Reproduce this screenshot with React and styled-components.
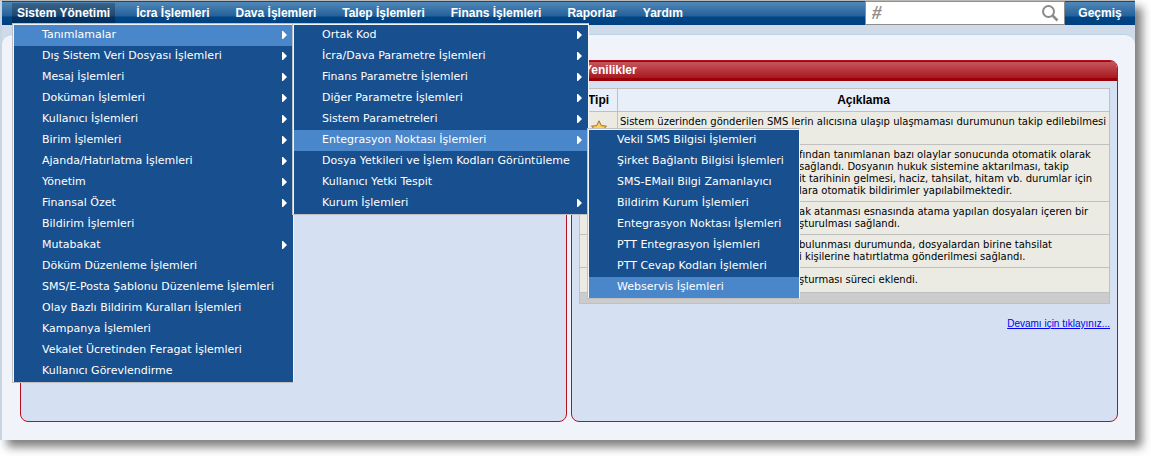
import React from "react";
import styled, { createGlobalStyle, css } from "styled-components";

const Global = createGlobalStyle`
  * { box-sizing: border-box; }
  body { margin: 0; background: #fff; overflow-x: hidden; font-family: "Liberation Sans", Arial, sans-serif; font-size: 12px; color: #000; }
  ul { margin: 0; padding: 0; list-style: none; }
`;

const Backdrop = styled.div`
  padding: 0 16px 16px 0;
`;

const Window = styled.div`
  border-left: 2px solid #c8d5e2;
  border-top: 1px solid #b9b9b9;
  background: #cfdbe8;
  box-shadow: 7px 7px 9px rgba(0, 0, 0, 0.5);
`;

const barFill = "linear-gradient(#00508c 0, #00508c 1px, #5088b8 1px, #24609a 15px, #004684 16px, #004080 24px)";

const TopBar = styled.header`
  display: flex;
  align-items: stretch;
  height: 24px;
  background: ${barFill};
`;

const MainNav = styled.nav`
  flex: 1;
  padding-left: 10px;
`;

const NavList = styled.ul`
  display: flex;
  gap: 16px;
  height: 24px;
  padding-top: 2px;
`;

const NavItem = styled.li`
  position: relative;
  height: 20px;
`;

const navText = css`
  border: 0;
  background: none;
  font-family: "Liberation Sans", Arial, sans-serif;
  font-size: 12px;
  font-weight: 700;
  color: #fff;
`;

const NavButton = styled.button`
  ${navText}
  height: 20px;
  padding: 0 5px;
  line-height: 20px;
  white-space: nowrap;
  background: ${(p) => (p.$open ? "linear-gradient(#3c6488 0, #1d466e 13px, #003263 14px, #00305f)" : "none")};
`;

const SearchBox = styled.label`
  display: flex;
  align-items: center;
  width: 200px;
  height: 24px;
  padding: 0 5px 0 6px;
  border: 1px solid #8f8f8f;
  background: #fff;
`;

const SearchInput = styled.input`
  flex: 1;
  min-width: 0;
  padding: 0;
  border: 0;
  outline: 0;
  background: none;
  font: italic 700 19px "Liberation Serif", "Times New Roman", serif;
  color: #8d8d8d;
`;

const HistoryButton = styled.button`
  ${navText}
  width: 70px;
  padding: 0;
`;

const Menu = styled.ul`
  position: absolute;
  z-index: 2;
  top: ${(p) => (p.$sub ? "-2px" : "100%")};
  left: ${(p) => (p.$sub ? "100%" : "0")};
  margin-left: ${(p) => (p.$sub ? "-1px" : "0")};
  width: ${(p) => p.$width}px;
  padding: 1px 0 0 1px;
  border: 1px solid #c0c0c0;
  border-right-color: #f4f4f4;
  background: #f4f4f4;
`;

const MenuItem = styled.li`
  position: relative;
`;

const MenuButton = styled.button`
  display: flex;
  align-items: center;
  justify-content: space-between;
  width: 100%;
  height: 21px;
  padding: 0 6px 2px 28px;
  border: 0;
  background: ${(p) => (p.$open ? "#4a86ca" : "#184f8e")};
  font-family: "DejaVu Sans", Verdana, sans-serif;
  font-size: 11px;
  color: #fff;
  white-space: nowrap;
`;

const Arrow = styled.svg`
  flex: none;
  width: 5px;
  height: 8px;
  fill: #fff;
`;

const Content = styled.main`
  display: flex;
  gap: 4px;
  margin-top: 9px;
  padding: 25px 17px 18px 18px;
  border-top: 1px solid #bcd2e6;
  border-radius: 10px 10px 0 0;
  background: #f0f4fa;
`;

const Panel = styled.section`
  flex: 1 1 0;
  min-width: 0;
  min-height: 362px;
  border: 1px solid #b5121f;
  border-radius: 8px;
  background: #d5e1f3;
  overflow: hidden;
`;

const PanelTitle = styled.h2`
  height: 20px;
  margin: 0;
  padding-left: 12px;
  border-bottom: 3px solid #9c0008;
  background: linear-gradient(#a80010 0, #a80010 1px, #c5555c 1px, #a91820);
  font-size: 12px;
  line-height: 19px;
  color: #fff;
`;

const PanelBody = styled.div`
  padding: 7px;
`;

const NewsTable = styled.table`
  width: 100%;
  table-layout: fixed;
  border-collapse: collapse;
  border: 1px solid #c0c0c0;
`;

const Th = styled.th`
  width: ${(p) => p.$width || "auto"};
  height: 23px;
  padding: 0;
  border: 1px solid #c0c0c0;
  background: #e8eff9;
  font-size: 12px;
`;

const Td = styled.td`
  height: ${(p) => (p.$footer ? "11px" : "25px")};
  padding: ${(p) => (p.$footer ? "0" : "4px 2px")};
  padding-left: ${(p) => (p.$covered ? "181px" : p.$footer ? "0" : "2px")};
  border: 1px solid #c0c0c0;
  background: ${(p) => (p.$footer ? "#cccccc" : "#ebebe3")};
  font-family: "DejaVu Sans", Verdana, sans-serif;
  font-size: 10px;
  line-height: 12px;
  text-align: ${(p) => (p.$icon ? "center" : "left")};
  white-space: nowrap;
`;

const Line = styled.div`
  min-height: 12px;
`;

const StarIcon = styled.svg`
  display: block;
  width: 16px;
  height: 16px;
  margin: 0 auto;
`;

const MoreRow = styled.div`
  display: flex;
  justify-content: flex-end;
  padding-top: 13px;
`;

const MoreLink = styled.a`
  font-size: 10px;
  line-height: 14px;
  color: #0000ee;
`;

const webMenu = [
  { label: "Vekil SMS Bilgisi İşlemleri" },
  { label: "Şirket Bağlantı Bilgisi İşlemleri" },
  { label: "SMS-EMail Bilgi Zamanlayıcı" },
  { label: "Bildirim Kurum İşlemleri" },
  { label: "Entegrasyon Noktası İşlemleri" },
  { label: "PTT Entegrasyon İşlemleri" },
  { label: "PTT Cevap Kodları İşlemleri" },
  { label: "Webservis İşlemleri", open: true },
];

const definitionsMenu = [
  { label: "Ortak Kod", more: true },
  { label: "İcra/Dava Parametre İşlemleri", more: true },
  { label: "Finans Parametre İşlemleri", more: true },
  { label: "Diğer Parametre İşlemleri", more: true },
  { label: "Sistem Parametreleri", more: true },
  { label: "Entegrasyon Noktası İşlemleri", more: true, open: true, children: webMenu, width: 213 },
  { label: "Dosya Yetkileri ve İşlem Kodları Görüntüleme" },
  { label: "Kullanıcı Yetki Tespit" },
  { label: "Kurum İşlemleri", more: true },
];

const systemMenu = [
  { label: "Tanımlamalar", more: true, open: true, children: definitionsMenu, width: 297 },
  { label: "Dış Sistem Veri Dosyası İşlemleri", more: true },
  { label: "Mesaj İşlemleri", more: true },
  { label: "Doküman İşlemleri", more: true },
  { label: "Kullanıcı İşlemleri", more: true },
  { label: "Birim İşlemleri", more: true },
  { label: "Ajanda/Hatırlatma İşlemleri", more: true },
  { label: "Yönetim", more: true },
  { label: "Finansal Özet", more: true },
  { label: "Bildirim İşlemleri" },
  { label: "Mutabakat", more: true },
  { label: "Döküm Düzenleme İşlemleri" },
  { label: "SMS/E-Posta Şablonu Düzenleme İşlemleri" },
  { label: "Olay Bazlı Bildirim Kuralları İşlemleri" },
  { label: "Kampanya İşlemleri" },
  { label: "Vekalet Ücretinden Feragat İşlemleri" },
  { label: "Kullanıcı Görevlendirme" },
];

const navItems = [
  { label: "Sistem Yönetimi", children: systemMenu, width: 282 },
  { label: "İcra İşlemleri" },
  { label: "Dava İşlemleri" },
  { label: "Talep İşlemleri" },
  { label: "Finans İşlemleri" },
  { label: "Raporlar" },
  { label: "Yardım" },
];

const news = [
  { lines: ["Sistem üzerinden gönderilen SMS lerin alıcısına ulaşıp ulaşmaması durumunun takip edilebilmesi", ""] },
  {
    covered: true,
    lines: [
      "fından tanımlanan bazı olaylar sonucunda otomatik olarak",
      "sağlandı. Dosyanın hukuk sistemine aktarılması, takip",
      "it tarihinin gelmesi, haciz, tahsilat, hitam vb. durumlar için",
      "lara otomatik bildirimler yapılabilmektedir.",
    ],
  },
  { covered: true, lines: ["ak atanması esnasında atama yapılan dosyaları içeren bir", "şturulması sağlandı."] },
  { covered: true, lines: ["bulunması durumunda, dosyalardan birine tahsilat", "i kişilerine hatırtlatma gönderilmesi sağlandı."] },
  { covered: true, lines: ["şturması süreci eklendi."] },
];

function MenuList({ items, width, sub }) {
  return (
    <Menu $width={width} $sub={sub}>
      {items.map((item) => (
        <MenuItem key={item.label}>
          <MenuButton type="button" $open={item.open}>
            {item.label}
            {item.more && (
              <Arrow viewBox="0 0 5 8" aria-hidden="true">
                <path d="M0 0h1l4 4-4 4H0z" />
              </Arrow>
            )}
          </MenuButton>
          {item.children && <MenuList items={item.children} width={item.width} sub />}
        </MenuItem>
      ))}
    </Menu>
  );
}

function Star() {
  return (
    <StarIcon viewBox="0 0 16 16" aria-hidden="true">
      <path d="M8 .8l2.300 4.800 5.200.6-3.900 3.600 1 5.200L8 12.400l-4.600 2.600 1-5.200L.5 6.200l5.200-.6z" fill="#fbd25c" stroke="#a8691f" strokeLinejoin="round" />
    </StarIcon>
  );
}

export default function App() {
  return (
    <Backdrop>
      <Global />
      <Window>
        <TopBar>
          <MainNav>
            <NavList>
              {navItems.map((item) => (
                <NavItem key={item.label}>
                  <NavButton type="button" $open={Boolean(item.children)}>{item.label}</NavButton>
                  {item.children && <MenuList items={item.children} width={item.width} />}
                </NavItem>
              ))}
            </NavList>
          </MainNav>
          <SearchBox>
            <SearchInput type="text" aria-label="Ara" defaultValue="#" />
            <svg width="18" height="18" viewBox="0 0 18 18" fill="none" stroke="#8a8a8a" aria-hidden="true">
              <circle cx="7.500" cy="7.500" r="5.500" strokeWidth="2" />
              <path d="M11.500 11.500l5 5" strokeWidth="2.500" />
            </svg>
          </SearchBox>
          <HistoryButton type="button">Geçmiş</HistoryButton>
        </TopBar>
        <Content>
          <Panel>
            <PanelTitle />
          </Panel>
          <Panel>
            <PanelTitle>Yenilikler</PanelTitle>
            <PanelBody>
              <NewsTable>
                <thead>
                  <tr>
                    <Th $width="38px">Tipi</Th>
                    <Th>Açıklama</Th>
                  </tr>
                </thead>
                <tbody>
                  {news.map((row) => (
                    <tr key={row.lines[0]}>
                      <Td $icon><Star /></Td>
                      <Td $covered={row.covered}>
                        {row.lines.map((line, i) => <Line key={i}>{line}</Line>)}
                      </Td>
                    </tr>
                  ))}
                </tbody>
                <tfoot>
                  <tr><Td $footer colSpan={2} /></tr>
                </tfoot>
              </NewsTable>
              <MoreRow>
                <MoreLink href="#yenilikler">Devamı için tıklayınız...</MoreLink>
              </MoreRow>
            </PanelBody>
          </Panel>
        </Content>
      </Window>
    </Backdrop>
  );
}
